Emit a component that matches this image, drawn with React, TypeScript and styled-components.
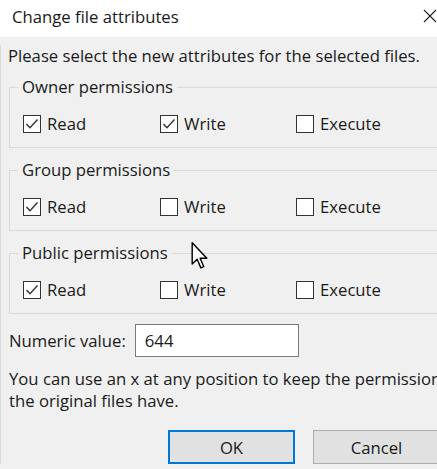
import React from 'react';
import styled, { createGlobalStyle } from 'styled-components';

const GlobalStyle = createGlobalStyle`
  html, body {
    margin: 0;
    padding: 0;
    overflow: hidden;
    background: #f0f0f0;
  }
  body {
    font-family: "Open Sans", "Noto Sans", "Liberation Sans", sans-serif;
    font-size: 16.7px;
    color: #1a1a1a;
  }
`;

const Dialog = styled.div`
  position: relative;
  width: 466px;
  height: 469px;
  background: #f0f0f0;
  overflow: hidden;
`;

const TitleBar = styled.div`
  height: 37px;
  background: #ffffff;
  display: flex;
  align-items: center;
  padding-left: 12px;
`;

const Title = styled.div`
  line-height: 22px;
  margin-top: -4px;
  flex: 1;
`;

const CloseIcon = styled.svg`
  width: 14px;
  height: 14px;
  margin-right: 29px;
  margin-top: -6px;
`;

const Body = styled.div`
  padding: 0 8px;
  border-left: 1px solid #dadada;
`;

const Intro = styled.p`
  margin: 8px 0 0 -1px;
  line-height: 22px;
  white-space: nowrap;
`;

const Group = styled.fieldset`
  margin: 11px 0 0 0;
  padding: 0 0 12px 8px;
  border: 1px solid #d9d9d9;
  min-width: 0;

  &:first-of-type {
    margin-top: 9px;
  }
`;

const Legend = styled.legend`
  padding: 0 4px;
  line-height: 22px;
`;

const CheckRow = styled.div`
  display: grid;
  grid-template-columns: 137px 136px 137px;
  padding: 15px 0 0 5px;
`;

const CheckItem = styled.label`
  display: flex;
  align-items: center;
  gap: 6px;
  height: 22px;
  line-height: 22px;
`;

const Box = styled.span`
  box-sizing: border-box;
  width: 18px;
  height: 18px;
  border: 1.5px solid #333333;
  background: #ffffff;
  display: flex;
  align-items: center;
  justify-content: center;
`;

const NumericRow = styled.div`
  display: flex;
  align-items: center;
  gap: 9px;
  margin-top: 10px;
`;

const NumericInput = styled.div`
  box-sizing: border-box;
  width: 164px;
  height: 33px;
  border: 1px solid #7a7a7a;
  background: #ffffff;
  padding-left: 9px;
  line-height: 31px;
`;

const Help = styled.p`
  margin: 11px 0 0 0;
  line-height: 22px;
  white-space: nowrap;
`;

const ButtonRow = styled.div`
  display: flex;
  gap: 18px;
  padding-left: 159px;
  margin-top: 18px;
`;

const Button = styled.button<{ $primary?: boolean }>`
  box-sizing: border-box;
  width: 127px;
  height: 34px;
  background: #e1e1e1;
  border: ${p => (p.$primary ? '2px solid #0078d7' : '1px solid #adadad')};
  font: inherit;
  color: #1a1a1a;
  padding: 0;
`;

const Cursor = styled.svg`
  position: absolute;
  left: 191px;
  top: 242px;
  width: 18px;
  height: 27px;
`;

const Checkbox: React.FC<{ checked?: boolean; label: string }> = ({ checked, label }) => (
  <CheckItem>
    <Box>
      {checked && (
        <svg width="14" height="14" viewBox="0 0 14 14">
          <polyline points="1.5,7 5,10.8 12.5,2.5" fill="none" stroke="#333" strokeWidth="1.4" />
        </svg>
      )}
    </Box>
    {label}
  </CheckItem>
);

const groups = [
  { title: 'Owner permissions', read: true, write: true, execute: false },
  { title: 'Group permissions', read: true, write: false, execute: false },
  { title: 'Public permissions', read: true, write: false, execute: false },
];

export default function App() {
  return (
    <Dialog>
      <GlobalStyle />
      <TitleBar>
        <Title>Change file attributes</Title>
        <CloseIcon viewBox="0 0 14 14">
          <path d="M1 1 L13 13 M13 1 L1 13" stroke="#222" strokeWidth="1.1" />
        </CloseIcon>
      </TitleBar>
      <Body>
        <Intro>Please select the new attributes for the selected files.</Intro>
        {groups.map(g => (
          <Group key={g.title}>
            <Legend>{g.title}</Legend>
            <CheckRow>
              <Checkbox checked={g.read} label="Read" />
              <Checkbox checked={g.write} label="Write" />
              <Checkbox checked={g.execute} label="Execute" />
            </CheckRow>
          </Group>
        ))}
        <NumericRow>
          Numeric value:
          <NumericInput>644</NumericInput>
        </NumericRow>
        <Help>
          You can use an x at any position to keep the permissions
          <br />
          the original files have.
        </Help>
        <ButtonRow>
          <Button $primary>OK</Button>
          <Button>Cancel</Button>
        </ButtonRow>
      </Body>
      <Cursor viewBox="0 0 12 19">
        <path d="M0.5 0.5 L0.5 15.5 L4 12.2 L6.6 18.2 L8.6 17.3 L6.1 11.4 L10.8 11.4 Z" fill="#fff" stroke="#000" strokeWidth="1" strokeLinejoin="round" />
      </Cursor>
    </Dialog>
  );
}
